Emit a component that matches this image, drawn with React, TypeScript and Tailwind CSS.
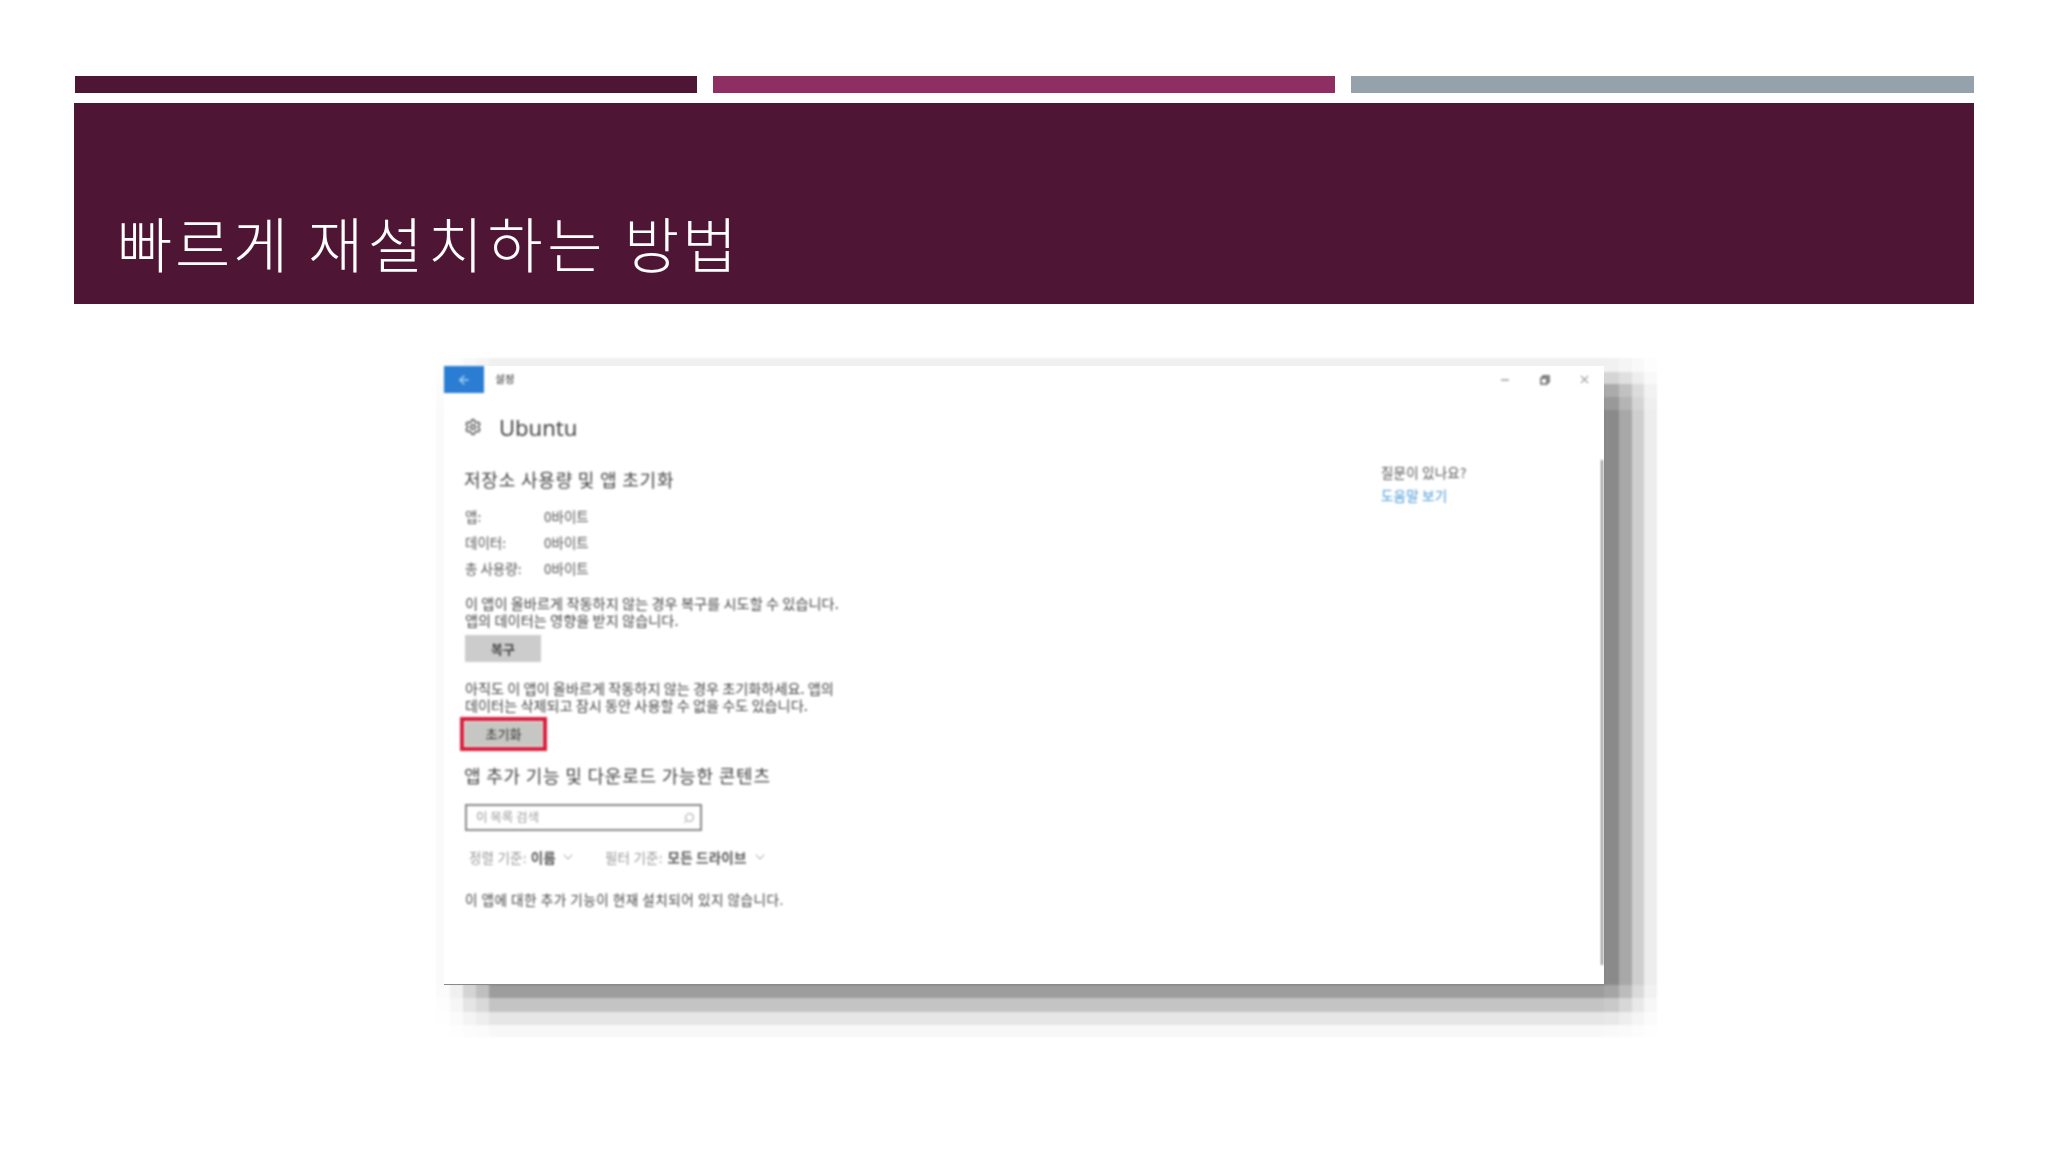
import { ArrowLeft, ChevronDown, Minus, Search, Settings, X } from 'lucide-react'

const font = "font-['Noto_Sans_CJK_KR','Noto_Sans',sans-serif]"

// falloff of the pixelated drop shadow behind the window, one factor per column / row
const shadowX = [0.04, 0.155, 0.44, 0.65, 1, 0.92, 0.68, 0.376, 0.14]
const shadowY = [0.12, 0.36, 0.72, 0.87, 1, 0.77, 0.46, 0.2, 0.054]

function shadowColor(ax: number, ay: number) {
  const v = Math.round(255 * (1 - 0.5 * ax * ay))
  return `rgb(${v}, ${v}, ${v})`
}

function UsageRow({ label, value }: { label: string; value: string }) {
  return (
    <div className="flex h-[26px] items-center text-[13.5px] text-[#555]">
      <span className="w-[79px]">{label}</span>
      <span>{value}</span>
    </div>
  )
}

export default function App() {
  return (
    <div className={`${font} flex h-[1152px] w-[2048px] flex-col overflow-hidden bg-white px-[74px] pt-[76px]`}>
      {/* Accent bars */}
      <div className="flex h-[17px] gap-[16px] pl-px">
        <div className="w-[622px] bg-[#4f1534]" />
        <div className="w-[622px] bg-[#8f2e62]" />
        <div className="w-[623px] bg-[#95a2ac]" />
      </div>

      {/* Title banner */}
      <div className="mt-[10px] flex h-[201px] items-end bg-[#4f1534] pb-[22px] pl-[43px]">
        <h1 className="text-[60px] font-light leading-[80px] tracking-[2.8px] text-white [word-spacing:1px]">
          빠르게 <span className="tracking-[4.6px]">재설치하는</span> 방법
        </h1>
      </div>

      {/* Settings window */}
      <div className="relative ml-[370px] mt-[62px] h-[619px] w-[1160px]">
        <div className="absolute -left-[8px] -top-[8px] grid grid-cols-[14px_13px_13px_13px_1115px_15px_13px_12px_13px] grid-rows-[14px_12px_13px_13px_575px_13px_14px_13px_12px] blur-[1px]">
          {shadowY.flatMap((ay, r) =>
            shadowX.map((ax, c) => <div key={`${r}-${c}`} style={{ backgroundColor: shadowColor(ax, ay) }} />),
          )}
        </div>

        <div className="relative h-full border-b border-[#8a8a8a] bg-white">
          <div className="relative h-full blur-[0.8px]">
            <div className="flex h-[27px] items-center">
              <div className="flex h-full w-[40px] items-center justify-center bg-[#2b7cd3]">
                <ArrowLeft size={14} strokeWidth={2.4} className="text-[#a9d3f5]" />
              </div>
              <span className="-mt-[2px] ml-[11px] text-[10.5px] font-bold text-[#666]">설정</span>
              <div className="ml-auto flex items-center text-[#555]">
                <Minus size={12} strokeWidth={1.8} />
                <svg width="10" height="10" viewBox="0 0 10 10" fill="none" stroke="currentColor" strokeWidth="1.4" className="ml-[29px]">
                  <rect x="1" y="3" width="6" height="6" />
                  <path d="M3 3V1h6v6H7" />
                </svg>
                <X size={13} strokeWidth={1.8} className="ml-[28px] mr-[13px]" />
              </div>
            </div>

            <div className="flex">
              <div className="w-[937px] pl-[21px]">
                <div className="-ml-[1px] mt-[16px] flex h-[36px] items-center">
                  <Settings size={18} strokeWidth={2} className="text-[#555]" />
                  <span className="ml-[17px] font-['Noto_Sans',sans-serif] text-[22px] text-[#444]">Ubuntu</span>
                </div>

                <h2 className="-ml-[1px] mt-[21px] flex h-[26px] items-center text-[18px] font-normal tracking-[0.8px] text-[#444]">저장소 사용량 및 앱 초기화</h2>

                <div className="mt-[11px]">
                  <UsageRow label="앱:" value="0바이트" />
                  <UsageRow label="데이터:" value="0바이트" />
                  <UsageRow label="총 사용량:" value="0바이트" />
                </div>

                <p className="mt-[14px] text-[14.2px] leading-[17px] tracking-[0.05px] text-[#444]">
                  이 앱이 올바르게 작동하지 않는 경우 복구를 시도할 수 있습니다.
                  <br />
                  앱의 데이터는 영향을 받지 않습니다.
                </p>
                <button className="mt-[6px] flex h-[27px] w-[76px] items-center justify-center bg-[#cccccc] text-[13px] font-bold text-[#444]">복구</button>

                <p className="mt-[18px] text-[14.2px] leading-[17px] text-[#444]">
                  아직도 이 앱이 올바르게 작동하지 않는 경우 초기화하세요. 앱의
                  <br />
                  데이터는 삭제되고 잠시 동안 사용할 수 없을 수도 있습니다.
                </p>
                <div className="-ml-[5px] mt-[3px] h-[34px] w-[87px] border-4 border-[#d81e3a] bg-[#eee] p-px">
                  <button className="flex h-full w-full items-center justify-center bg-[#c6c6c2] text-[13px] text-[#333]">초기화</button>
                </div>

                <h2 className="-ml-[1px] mt-[11px] flex h-[26px] items-center text-[18px] font-normal tracking-[0.8px] text-[#444]">앱 추가 기능 및 다운로드 가능한 콘텐츠</h2>

                <div className="pt-[16px]">
                  <div className="flex h-[27px] w-[237px] items-center justify-between border-2 border-[#8a8a8a] pl-[9px] pr-[5px] text-[12.5px] text-[#999]">
                    <span>이 목록 검색</span>
                    <Search size={12} className="-scale-x-100 text-[#999]" />
                  </div>
                </div>

                <div className="mt-[16px] flex h-[20px] items-center pl-[4px] text-[13.5px] tracking-[0.2px]">
                  <span className="text-[#999]">정렬 기준:</span>
                  <span className="ml-[4px] font-bold text-[#555]">이름</span>
                  <ChevronDown size={16} strokeWidth={1.5} className="ml-[4px] text-[#999]" />
                  <span className="ml-[29px] text-[#999]">필터 기준:</span>
                  <span className="ml-[5px] font-bold text-[#555]">모든 드라이브</span>
                  <ChevronDown size={16} strokeWidth={1.5} className="ml-[5px] text-[#999]" />
                </div>

                <p className="mt-[22px] flex h-[20px] items-center text-[13.6px] tracking-[0.5px] text-[#444]">이 앱에 대한 추가 기능이 현재 설치되어 있지 않습니다.</p>
              </div>

              <div className="mt-[68px] text-[13.5px] leading-[23px] tracking-[0.2px]">
                <p className="text-[#555]">질문이 있나요?</p>
                <p className="text-[#4a9ad6]">도움말 보기</p>
              </div>
            </div>

            {/* Scrollbar */}
            <div className="absolute left-[1157px] top-[94px] h-[505px] w-[2px] bg-[#8a8a8a]" />
          </div>
        </div>
      </div>
    </div>
  )
}
